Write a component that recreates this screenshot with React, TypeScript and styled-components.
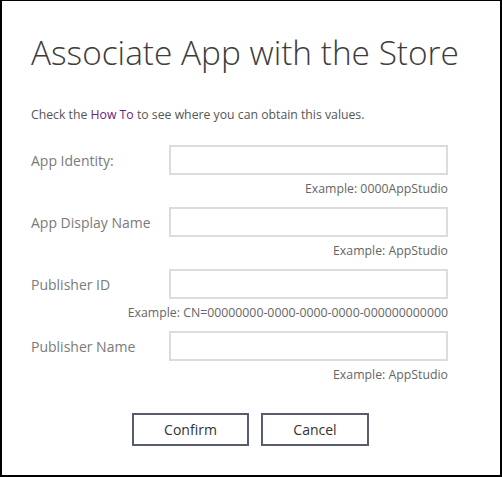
import React, { useState } from 'react';
import styled, { createGlobalStyle } from 'styled-components';

const GlobalStyle = createGlobalStyle`
  html, body {
    margin: 0;
    padding: 0;
    background: #ffffff;
  }
  * {
    box-sizing: border-box;
  }
`;

const fields = [
  { key: 'identity', label: 'App Identity:', example: 'Example: 0000AppStudio' },
  { key: 'displayName', label: 'App Display Name', example: 'Example: AppStudio' },
  { key: 'publisherId', label: 'Publisher ID', example: 'Example: CN=00000000-0000-0000-0000-000000000000' },
  { key: 'publisherName', label: 'Publisher Name', example: 'Example: AppStudio' },
];

const App: React.FC = () => {
  const [values, setValues] = useState<Record<string, string>>({});

  const handleChange = (key: string, value: string) => {
    setValues({ ...values, [key]: value });
  };

  return (
    <>
      <GlobalStyle />
      <Dialog>
        <Title>Associate App with the Store</Title>
        <Intro>
          Check the <HowTo href="#">How To</HowTo> to see where you can obtain this values.
        </Intro>

        <Form>
          {fields.map((f) => (
            <FieldGroup key={f.key}>
              <FieldRow>
                <Label htmlFor={f.key}>{f.label}</Label>
                <Input
                  id={f.key}
                  value={values[f.key] || ''}
                  onChange={(e) => handleChange(f.key, e.target.value)}
                />
              </FieldRow>
              <Example>{f.example}</Example>
            </FieldGroup>
          ))}
        </Form>

        <Actions>
          <ActionButton $width={117}>Confirm</ActionButton>
          <ActionButton $width={108}>Cancel</ActionButton>
        </Actions>
      </Dialog>
    </>
  );
};

const Dialog = styled.div`
  width: 502px;
  height: 477px;
  border-style: solid;
  border-color: #000000;
  border-width: 1px 2px 2px 2px;
  background: #ffffff;
  padding: 29px 52px 0 29px;
  font-family: 'Open Sans', 'Noto Sans', sans-serif;
`;

const Title = styled.h1`
  margin: 0;
  font-size: 33.4px;
  font-weight: 300;
  line-height: 44px;
  color: #3c3c3c;
  white-space: nowrap;
`;

const Intro = styled.p`
  margin: 32px 0 0;
  font-size: 12.25px;
  line-height: 18px;
  color: #555555;
`;

const HowTo = styled.a`
  color: #68217a;
  text-decoration: none;
`;

const Form = styled.div`
  margin-top: 21px;
  display: flex;
  flex-direction: column;
  gap: 10px;
`;

const FieldGroup = styled.div`
  display: flex;
  flex-direction: column;
`;

const FieldRow = styled.div`
  display: flex;
  align-items: center;
  justify-content: space-between;
`;

const Label = styled.label`
  font-size: 14px;
  color: #7a7a7a;
`;

const Input = styled.input`
  width: 279px;
  height: 30px;
  border: 2px solid #dcdcdc;
  outline: none;
  padding: 0 6px;
  font-family: inherit;
  font-size: 13px;
  color: #333333;

  &:focus {
    border-color: #b8b8b8;
  }
`;

const Example = styled.div`
  margin-top: 6px;
  font-size: 12.3px;
  line-height: 16px;
  color: #666666;
  text-align: right;
  white-space: nowrap;
`;

const Actions = styled.div`
  margin-top: 30px;
  display: flex;
  justify-content: center;
  gap: 12px;
  padding-left: 22px;
`;

const ActionButton = styled.button<{ $width: number }>`
  width: ${(p) => p.$width}px;
  height: 33px;
  border: 2px solid #575d6e;
  background: #ffffff;
  font-family: inherit;
  font-size: 14px;
  color: #333333;
  cursor: pointer;

  &:hover {
    background: #f2f2f2;
  }
`;

export default App;
